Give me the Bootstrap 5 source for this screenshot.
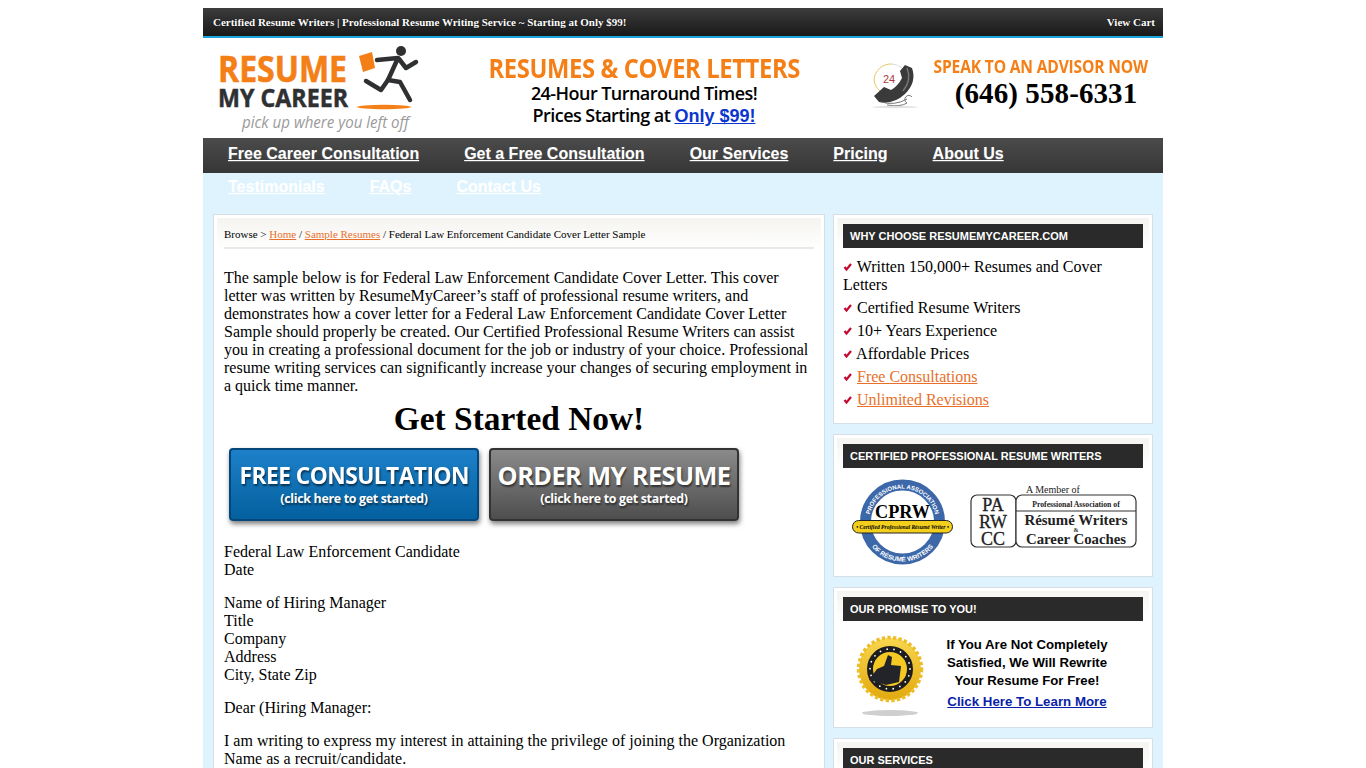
<!DOCTYPE html>
<html lang="en">
<head>
  <meta charset="UTF-8">
  <title>Federal Law Enforcement Candidate Cover Letter Sample</title>
  <meta name="viewport" content="width=device-width, initial-scale=1">
  <link href="https://cdn.jsdelivr.net/npm/bootstrap@5.3.0/dist/css/bootstrap.min.css" rel="stylesheet">
  <style>
    body { background: #fff; font-family: "Liberation Serif", serif; font-size: 16px; line-height: 18px; color: #000; }
    a { color: #e8702a; }
    .site-wrap { width: 960px; margin: 8px auto 0; background: #dff3fe; }
    .top-strip { height: 30px; padding: 0 8px 0 10px; background: linear-gradient(#3c3c3c, #191919); border-bottom: 2px solid #1ba5dc; color: #fff; font-size: 11px; font-weight: 700; text-shadow: 0 0 1px #000; }
    .top-strip a { color: #fff; text-decoration: none; }
    .head-area { height: 100px; background: #fff; }
    .logo-svg { width: 210px; height: 98px; margin: 2px 0 0 10px; flex: none; }
    .promo { width: 360px; flex: none; margin: 16px 0 0 41px; font-family: "Open Sans", sans-serif; text-align: center; }
    .promo-big { display: inline-block; color: #f57f17; font-size: 27px; font-weight: 700; line-height: 28px; letter-spacing: -0.4px; white-space: nowrap; transform: scaleX(.879); }
    .promo-line { font-size: 18px; font-weight: 600; line-height: 22px; letter-spacing: -0.55px; white-space: nowrap; }
    .promo-line a { font-family: "Liberation Sans", sans-serif; font-weight: 700; letter-spacing: 0; color: #0b35cf; }
    .phone-svg { width: 52px; height: 56px; flex: none; margin: 22px 0 0 47px; }
    .call-box { width: 235px; flex: none; margin: 19px 0 0; text-align: center; }
    .call-title { display: inline-block; color: #f57f17; font-family: "Open Sans", sans-serif; font-size: 17px; font-weight: 700; line-height: 20px; letter-spacing: -0.2px; white-space: nowrap; transform: scaleX(.918); }
    .call-num { padding-left: 11px; font-size: 29px; font-weight: 700; line-height: 32px; letter-spacing: 0.1px; white-space: nowrap; }
    .main-menu { height: 35px; background: linear-gradient(#4b4b4b, #363636); padding: 0 100px 0 25px; column-gap: 45px; align-content: flex-start; font-family: "Liberation Sans", sans-serif; font-size: 16px; font-weight: 700; }
    .main-menu a { display: block; height: 33px; line-height: 31px; color: #fff; text-shadow: 0 1px 1px rgba(255,255,255,.2); }
    .menu-spacer { height: 33px; }
    .content-row { padding: 8px 10px 0; gap: 8px; align-items: flex-start; }
    .left-panel { width: 612px; flex: none; background: #fff; border: 1px solid #d5dfe5; padding: 3px; }
    .crumbs { height: 31px; padding: 0 7px; margin-bottom: 20px; background: linear-gradient(#f5f4f0, #fff); font-size: 11px; line-height: 14px; }
    .crumbs-line { height: 31px; padding-top: 9px; border-bottom: 2px solid #e9e9e9; }
    .letter-body { padding: 0 7px; }
    .letter-body p { margin-bottom: 15px; }
    .get-now { font-size: 33.4px; font-weight: 700; line-height: 40px; text-align: center; margin: 4px 0 9px; }
    .cta-row { gap: 10px; padding-left: 5px; margin-bottom: 22px; }
    .cta-btn { width: 250px; height: 73px; padding: 0; border-radius: 4px; color: #fff; font-family: "Open Sans", sans-serif; font-weight: 700; text-align: center; box-shadow: 1px 3px 5px rgba(0,0,0,.5); text-shadow: 1px 2px 2px rgba(0,0,0,.55); display: block; text-decoration: none; overflow: hidden; }
    .cta-btn:hover { color: #fff; }
    .cta-blue { background: linear-gradient(#1d80c8, #04609f); border: 2px solid #05477a; }
    .cta-grey { background: linear-gradient(#8a8a8a, #4e4e4e); border: 2px solid #333; }
    .cta-big { display: inline-block; font-size: 24px; line-height: 28px; margin-top: 11px; margin-bottom: 2px; letter-spacing: -0.55px; white-space: nowrap; }
    .cta-blue .cta-big { transform: scaleX(.946); }
    .cta-grey .cta-big { font-size: 25.3px; }
    .cta-small { display: block; font-size: 12.4px; line-height: 16px; letter-spacing: -0.3px; }
    .side-col { width: 320px; flex: none; gap: 10px; }
    .side-box { background: #fff; border: 1px solid #d5dfe5; padding: 3px; }
    .side-inner { background: linear-gradient(#f5f4f0, #fff 32px); padding: 6px 6px 0; }
    .side-title { height: 24px; background: #2a2a2a; color: #fff; font-family: "Liberation Sans", sans-serif; font-size: 11px; font-weight: 700; line-height: 24px; padding-left: 7px; text-transform: uppercase; }
    .why-list { list-style: none; margin: 0; padding: 10px 0 6px; }
    .why-list li { margin-bottom: 5px; }
    .tick { width: 10px; height: 8px; vertical-align: 1px; }
    .cert-row { height: 105px; }
    .cprw-svg { width: 110px; height: 105px; flex: none; }
    .parw-svg { width: 172px; height: 105px; flex: none; margin-left: 15px; }
    .promise-row { height: 103px; }
    .seal-svg { width: 78px; height: 100px; flex: none; margin-left: 8px; }
    .promise-text { width: 176px; margin: 15px 0 0 10px; font-family: "Liberation Sans", sans-serif; font-size: 13.2px; font-weight: 700; line-height: 18px; text-align: center; }
    .promise-text a { display: block; margin-top: 3px; color: #0b1fa8; font-size: 13.3px; }
  </style>
</head>
<body>
  <div class="site-wrap">
    <div class="top-strip d-flex justify-content-between align-items-center">
      <span>Certified Resume Writers | Professional Resume Writing Service ~ Starting at Only $99!</span>
      <a href="#">View Cart</a>
    </div>

    <div class="head-area d-flex align-items-start">
      <svg class="logo-svg" viewBox="213 40 210 98">
        <text x="218" y="82" font-family="Open Sans" font-weight="700" font-size="36" fill="#f57f17" stroke="#f57f17" stroke-width=".6" textLength="129" lengthAdjust="spacingAndGlyphs">RESUME</text>
        <text x="218" y="107" font-family="Open Sans" font-weight="700" font-size="25" fill="#2f3032" stroke="#2f3032" stroke-width=".5" textLength="130" lengthAdjust="spacingAndGlyphs">MY CAREER</text>
        <text x="242" y="128" font-family="Open Sans" font-style="italic" font-size="16" fill="#9a9a9a" textLength="167" lengthAdjust="spacingAndGlyphs">pick up where you left off</text>
        <polygon points="359,56 372,52 375,68 363,72" fill="#f57f17"/>
        <circle cx="401" cy="51" r="5" fill="#2f3032"/>
        <g fill="none" stroke="#2f3032" stroke-width="4.5" stroke-linecap="round" stroke-linejoin="round">
          <path d="M377 60 L398 58 L388 80"/>
          <path d="M399 59 L406 68 L416 62"/>
          <path d="M388 80 L400 82 L410 100"/>
          <path d="M388 80 L381 90 L366 81"/>
        </g>
        <ellipse cx="384" cy="107" rx="27" ry="2.2" fill="#f57f17"/>
      </svg>

      <div class="promo">
        <div class="promo-big">RESUMES &amp; COVER LETTERS</div>
        <div class="promo-line">24-Hour Turnaround Times!</div>
        <div class="promo-line">Prices Starting at <a href="#">Only $99!</a></div>
      </div>

      <svg class="phone-svg" viewBox="0 0 52 56">
        <path d="M21 4 A17 17 0 0 0 3 20 A17 17 0 0 0 9 31" fill="none" stroke="#e7c766" stroke-width="1"/>
        <path d="M21 4 A17 17 0 0 1 31 8" fill="none" stroke="#ddd" stroke-width="1"/>
        <text x="12" y="23" font-family="Liberation Sans" font-size="11" fill="#b03a3a">24</text>
        <path d="M34 5 L41 8 Q46 22 34 34 Q22 45 8 42 L3 36 L13 27 L20 30 Q27 26 31 18 L29 11 Z" fill="#3a3a3a"/>
        <path d="M36 8 Q41 20 32 31" fill="none" stroke="#777" stroke-width="1.500"/>
        <path d="M10 42 Q24 46 36 39 M16 45 Q30 47 36 43 A4 4 0 1 1 41 37" fill="none" stroke="#777" stroke-width="1"/>
        <ellipse cx="24" cy="47" rx="23" ry="1.200" fill="#e2e2e2"/>
      </svg>

      <div class="call-box">
        <div class="call-title">SPEAK TO AN ADVISOR NOW</div>
        <div class="call-num">(646) 558-6331</div>
      </div>
    </div>

    <ul class="nav main-menu">
      <li><a href="#">Free Career Consultation</a></li>
      <li><a href="#">Get a Free Consultation</a></li>
      <li><a href="#">Our Services</a></li>
      <li><a href="#">Pricing</a></li>
      <li><a href="#">About Us</a></li>
      <li><a href="#">Testimonials</a></li>
      <li><a href="#">FAQs</a></li>
      <li><a href="#">Contact Us</a></li>
    </ul>
    <div class="menu-spacer"></div>

    <div class="content-row d-flex">
      <div class="left-panel">
        <div class="crumbs"><div class="crumbs-line">Browse &gt; <a href="#">Home</a> / <a href="#">Sample Resumes</a> / Federal Law Enforcement Candidate Cover Letter Sample</div></div>
        <div class="letter-body">
          <p class="mb-0">The sample below is for Federal Law Enforcement Candidate Cover Letter. This cover letter was written by ResumeMyCareer’s staff of professional resume writers, and demonstrates how a cover letter for a Federal Law Enforcement Candidate Cover Letter Sample should properly be created. Our Certified Professional Resume Writers can assist you in creating a professional document for the job or industry of your choice. Professional resume writing services can significantly increase your changes of securing employment in a quick time manner.</p>
          <div class="get-now">Get Started Now!</div>
          <div class="cta-row d-flex">
            <a href="#" class="btn cta-btn cta-blue"><span class="cta-big">FREE CONSULTATION</span><span class="cta-small">(click here to get started)</span></a>
            <a href="#" class="btn cta-btn cta-grey"><span class="cta-big">ORDER MY RESUME</span><span class="cta-small">(click here to get started)</span></a>
          </div>
          <p>Federal Law Enforcement Candidate<br>Date</p>
          <p>Name of Hiring Manager<br>Title<br>Company<br>Address<br>City, State Zip</p>
          <p>Dear (Hiring Manager:</p>
          <p>I am writing to express my interest in attaining the privilege of joining the Organization Name as a recruit/candidate.</p>
        </div>
      </div>

      <div class="side-col d-flex flex-column">
        <div class="side-box">
          <div class="side-inner">
            <div class="side-title">Why Choose ResumeMyCareer.com</div>
            <ul class="why-list">
              <li><svg class="tick" viewBox="0 0 10 8"><path d="M1.500 4 L3.500 6.500 L8 1" fill="none" stroke="#c4082f" stroke-width="2.2"/></svg> Written 150,000+ Resumes and Cover Letters</li>
              <li><svg class="tick" viewBox="0 0 10 8"><path d="M1.500 4 L3.500 6.500 L8 1" fill="none" stroke="#c4082f" stroke-width="2.2"/></svg> Certified Resume Writers</li>
              <li><svg class="tick" viewBox="0 0 10 8"><path d="M1.500 4 L3.500 6.500 L8 1" fill="none" stroke="#c4082f" stroke-width="2.2"/></svg> 10+ Years Experience</li>
              <li><svg class="tick" viewBox="0 0 10 8"><path d="M1.500 4 L3.500 6.500 L8 1" fill="none" stroke="#c4082f" stroke-width="2.2"/></svg> Affordable Prices</li>
              <li><svg class="tick" viewBox="0 0 10 8"><path d="M1.500 4 L3.500 6.500 L8 1" fill="none" stroke="#c4082f" stroke-width="2.2"/></svg> <a href="#">Free Consultations</a></li>
              <li><svg class="tick" viewBox="0 0 10 8"><path d="M1.500 4 L3.500 6.500 L8 1" fill="none" stroke="#c4082f" stroke-width="2.2"/></svg> <a href="#">Unlimited Revisions</a></li>
            </ul>
          </div>
        </div>

        <div class="side-box">
          <div class="side-inner">
            <div class="side-title">Certified Professional Resume Writers</div>
            <div class="cert-row d-flex">
              <svg class="cprw-svg" viewBox="843 468 110 105">
                <circle cx="902.500" cy="522" r="37" fill="#fff" stroke="#3c67a8" stroke-width="11"/>
                <path id="ringTop" d="M869 522 A33.500 33.500 0 0 1 936 522" fill="none"/>
                <path id="ringBot" d="M863 522 A39.500 39.500 0 0 0 942 522" fill="none"/>
                <text font-family="Liberation Sans" font-size="6" font-weight="700" fill="#fff" text-anchor="middle"><textPath href="#ringTop" startOffset="50%">PROFESSIONAL ASSOCIATION</textPath></text>
                <text font-family="Liberation Sans" font-size="6.5" font-weight="700" fill="#fff" text-anchor="middle"><textPath href="#ringBot" startOffset="50%">OF RÉSUMÉ WRITERS</textPath></text>
                <text x="902.500" y="518" font-size="19" font-weight="700" text-anchor="middle" font-family="Liberation Serif" textLength="55" lengthAdjust="spacingAndGlyphs">CPRW</text>
                <rect x="852.500" y="520.500" width="100" height="12.500" rx="6.250" fill="#f3cf1d" stroke="#222"/>
                <text x="902.500" y="529" font-size="5.6" font-weight="700" font-style="italic" text-anchor="middle" font-family="Liberation Serif">• Certified Professional Résumé Writer •</text>
              </svg>
              <svg class="parw-svg" viewBox="968 468 172 105">
                <rect x="971" y="495" width="45" height="52" rx="6" fill="#fff" stroke="#333" stroke-width="1.2"/>
                <rect x="1016" y="495" width="120" height="52" rx="6" fill="#fff" stroke="#333" stroke-width="1.2"/>
                <path d="M1016 511 H1136" stroke="#333"/>
                <g font-family="Liberation Serif" fill="#222" text-anchor="middle">
                  <text x="1053" y="493" font-size="10">A Member of</text>
                  <g stroke="#222" stroke-width=".3">
                    <text x="993" y="511" font-size="18">PA</text>
                    <text x="993" y="528" font-size="18">RW</text>
                    <text x="993" y="545" font-size="18">CC</text>
                  </g>
                  <text x="1076" y="507" font-size="7.7" font-weight="700">Professional Association of</text>
                  <text x="1076" y="525" font-size="14" font-weight="700" textLength="103" lengthAdjust="spacingAndGlyphs">Résumé Writers</text>
                  <text x="1076" y="532" font-size="6" font-weight="700">&amp;</text>
                  <text x="1076" y="544" font-size="14" font-weight="700" textLength="100" lengthAdjust="spacingAndGlyphs">Career Coaches</text>
                </g>
              </svg>
            </div>
          </div>
        </div>

        <div class="side-box">
          <div class="side-inner">
            <div class="side-title">Our Promise To You!</div>
            <div class="promise-row d-flex">
              <svg class="seal-svg" viewBox="851 621 78 100">
                <defs>
                  <linearGradient id="goldFill" x1="0" y1="0" x2="0" y2="1"><stop offset="0" stop-color="#f8d64e"/><stop offset="1" stop-color="#e2a90f"/></linearGradient>
                </defs>
                <ellipse cx="890" cy="713" rx="28" ry="3" fill="#cfcfcf"/>
                <circle cx="890" cy="669" r="31" fill="url(#goldFill)"/>
                <circle cx="890" cy="669" r="31.500" fill="none" stroke="#edbd27" stroke-width="3.500" stroke-dasharray="3.300 2.300"/>
                <circle cx="890" cy="669" r="20" fill="#f5c823" stroke="#1d1d20" stroke-width="6"/>
                <circle cx="890" cy="669" r="20" fill="none" stroke="#fff" stroke-width="1.800" stroke-linecap="round" stroke-dasharray="0 6.980"/>
                <path d="M869 680 L877 669 L884 666 L888 655 L892 657 L891 665 L901 666 L899 682 L886 685 Z" fill="#23242a"/>
              </svg>
              <div class="promise-text">If You Are Not Completely Satisfied, We Will Rewrite Your Resume For Free!<a href="#">Click Here To Learn More</a></div>
            </div>
          </div>
        </div>

        <div class="side-box">
          <div class="side-inner">
            <div class="side-title">Our Services</div>
          </div>
        </div>
      </div>
    </div>
  </div>
  <script src="https://cdn.jsdelivr.net/npm/bootstrap@5.3.0/dist/js/bootstrap.bundle.min.js"></script>
</body>
</html>
